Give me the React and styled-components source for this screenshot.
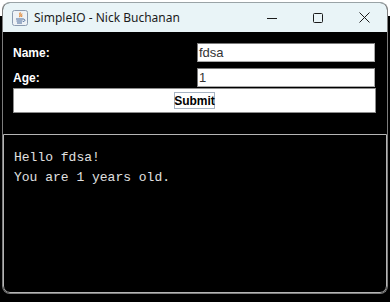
import React from "react";
import styled, { createGlobalStyle } from "styled-components";

const Global = createGlobalStyle`
  html, body { margin: 0; padding: 0; background: #000; }
  #root { width: 390px; height: 302px; }
`;

const Screen = styled.div`
  width: 390px;
  height: 302px;
  box-sizing: border-box;
  padding: 2px 2px 0 2px;
  background: linear-gradient(#ffffff 0 16px, #000000 16px);
`;

const Window = styled.div`
  width: 386px;
  height: 292px;
  box-sizing: border-box;
  border: 1px solid #7c7c7c;
  border-top-color: #9aa3a6;
  border-radius: 8px;
  overflow: hidden;
  display: flex;
  flex-direction: column;
  background: #000;
`;

const TitleBar = styled.div`
  height: 29px;
  flex: none;
  display: flex;
  align-items: center;
  background: #e9f4f7;
  font-family: "Noto Sans", "Open Sans", sans-serif;
  font-size: 12px;
  color: #1b1b1b;
`;

const AppIcon = styled.svg`
  width: 16px;
  height: 16px;
  margin: 0 0 0 9px;
  flex: none;
`;

const Title = styled.span`
  margin-left: 6px;
  flex: 1;
  white-space: nowrap;
`;

const CtrlButton = styled.div`
  width: 46px;
  height: 29px;
  display: flex;
  align-items: center;
  justify-content: center;
`;

const Content = styled.div`
  flex: 1;
  display: flex;
  flex-direction: column;
  min-height: 0;
`;

const Form = styled.div`
  display: grid;
  grid-template-columns: 184px 178px;
  grid-auto-rows: 19px;
  row-gap: 6px;
  padding: 11px 10px 0 10px;
`;

const Label = styled.label`
  display: flex;
  align-items: center;
  font-family: "Liberation Sans", Arial, sans-serif;
  font-weight: bold;
  font-size: 12px;
  color: #ffffff;
`;

const Field = styled.div`
  box-sizing: border-box;
  background: #fff;
  border: 1px solid #7a7a7a;
  border-right-color: #a9a9a9;
  border-bottom-color: #a9a9a9;
  display: flex;
  align-items: center;
  padding-left: 1px;
  font-family: "Liberation Sans", Arial, sans-serif;
  font-size: 13px;
  color: #333;
`;

const ButtonPanel = styled.div`
  box-sizing: border-box;
  margin: 1px 10px 0 10px;
  width: 363px;
  height: 25px;
  background: #fff;
  border: 1px solid #8d8d8d;
  display: flex;
  align-items: center;
  justify-content: center;
`;

const SubmitButton = styled.button`
  box-sizing: border-box;
  height: 17px;
  width: 41px;
  padding: 0;
  margin: 0;
  background: #fff;
  border: 1px solid #a7b3c2;
  font-family: "Liberation Sans", Arial, sans-serif;
  font-weight: bold;
  font-size: 12px;
  color: #000;
  display: flex;
  align-items: center;
  justify-content: center;
`;

const Output = styled.div`
  flex: 1;
  margin-top: 21px;
  box-sizing: border-box;
  border: 1px solid #b5b5b5;
  border-radius: 0 0 7px 7px;
  padding: 13px 10px;
  background: #000;
  font-family: "Liberation Mono", "Courier New", monospace;
  font-size: 13px;
  line-height: 20px;
  color: #e0e0e0;
  white-space: pre;
`;

function JavaIcon() {
  return (
    <AppIcon viewBox="0 0 16 16">
      <rect x="0.5" y="0.5" width="15" height="15" rx="2" fill="#eef2f6" stroke="#8b9bb0" />
      <path d="M8.5 2.5 C6.5 4 9.5 5 7.5 7" stroke="#e07b1e" strokeWidth="1.2" fill="none" />
      <path d="M10 3.5 C9 5 10.5 5.5 9.5 7" stroke="#e07b1e" strokeWidth="1" fill="none" />
      <path d="M4 9 H11 M4.5 11 H10.5 M5 13 H10" stroke="#4a6a9a" strokeWidth="1" />
      <path d="M11 9 C13.5 9 13.5 11.5 11 11.5" stroke="#4a6a9a" strokeWidth="1" fill="none" />
    </AppIcon>
  );
}

export default function App() {
  return (
    <>
      <Global />
      <Screen>
        <Window>
          <TitleBar>
            <JavaIcon />
            <Title>SimpleIO - Nick Buchanan</Title>
            <CtrlButton>
              <svg width="10" height="10" viewBox="0 0 10 10">
                <path d="M0 5.5 H10" stroke="#1b1b1b" strokeWidth="1" />
              </svg>
            </CtrlButton>
            <CtrlButton>
              <svg width="10" height="10" viewBox="0 0 10 10">
                <rect x="0.5" y="0.5" width="9" height="9" rx="1" fill="none" stroke="#1b1b1b" strokeWidth="1" />
              </svg>
            </CtrlButton>
            <CtrlButton>
              <svg width="11" height="11" viewBox="0 0 11 11">
                <path d="M0.5 0.5 L10.5 10.5 M10.5 0.5 L0.5 10.5" stroke="#1b1b1b" strokeWidth="1" />
              </svg>
            </CtrlButton>
          </TitleBar>
          <Content>
            <Form>
              <Label>Name:</Label>
              <Field>fdsa</Field>
              <Label>Age:</Label>
              <Field>1</Field>
            </Form>
            <ButtonPanel>
              <SubmitButton>Submit</SubmitButton>
            </ButtonPanel>
            <Output>{"Hello fdsa!\nYou are 1 years old."}</Output>
          </Content>
        </Window>
      </Screen>
    </>
  );
}
